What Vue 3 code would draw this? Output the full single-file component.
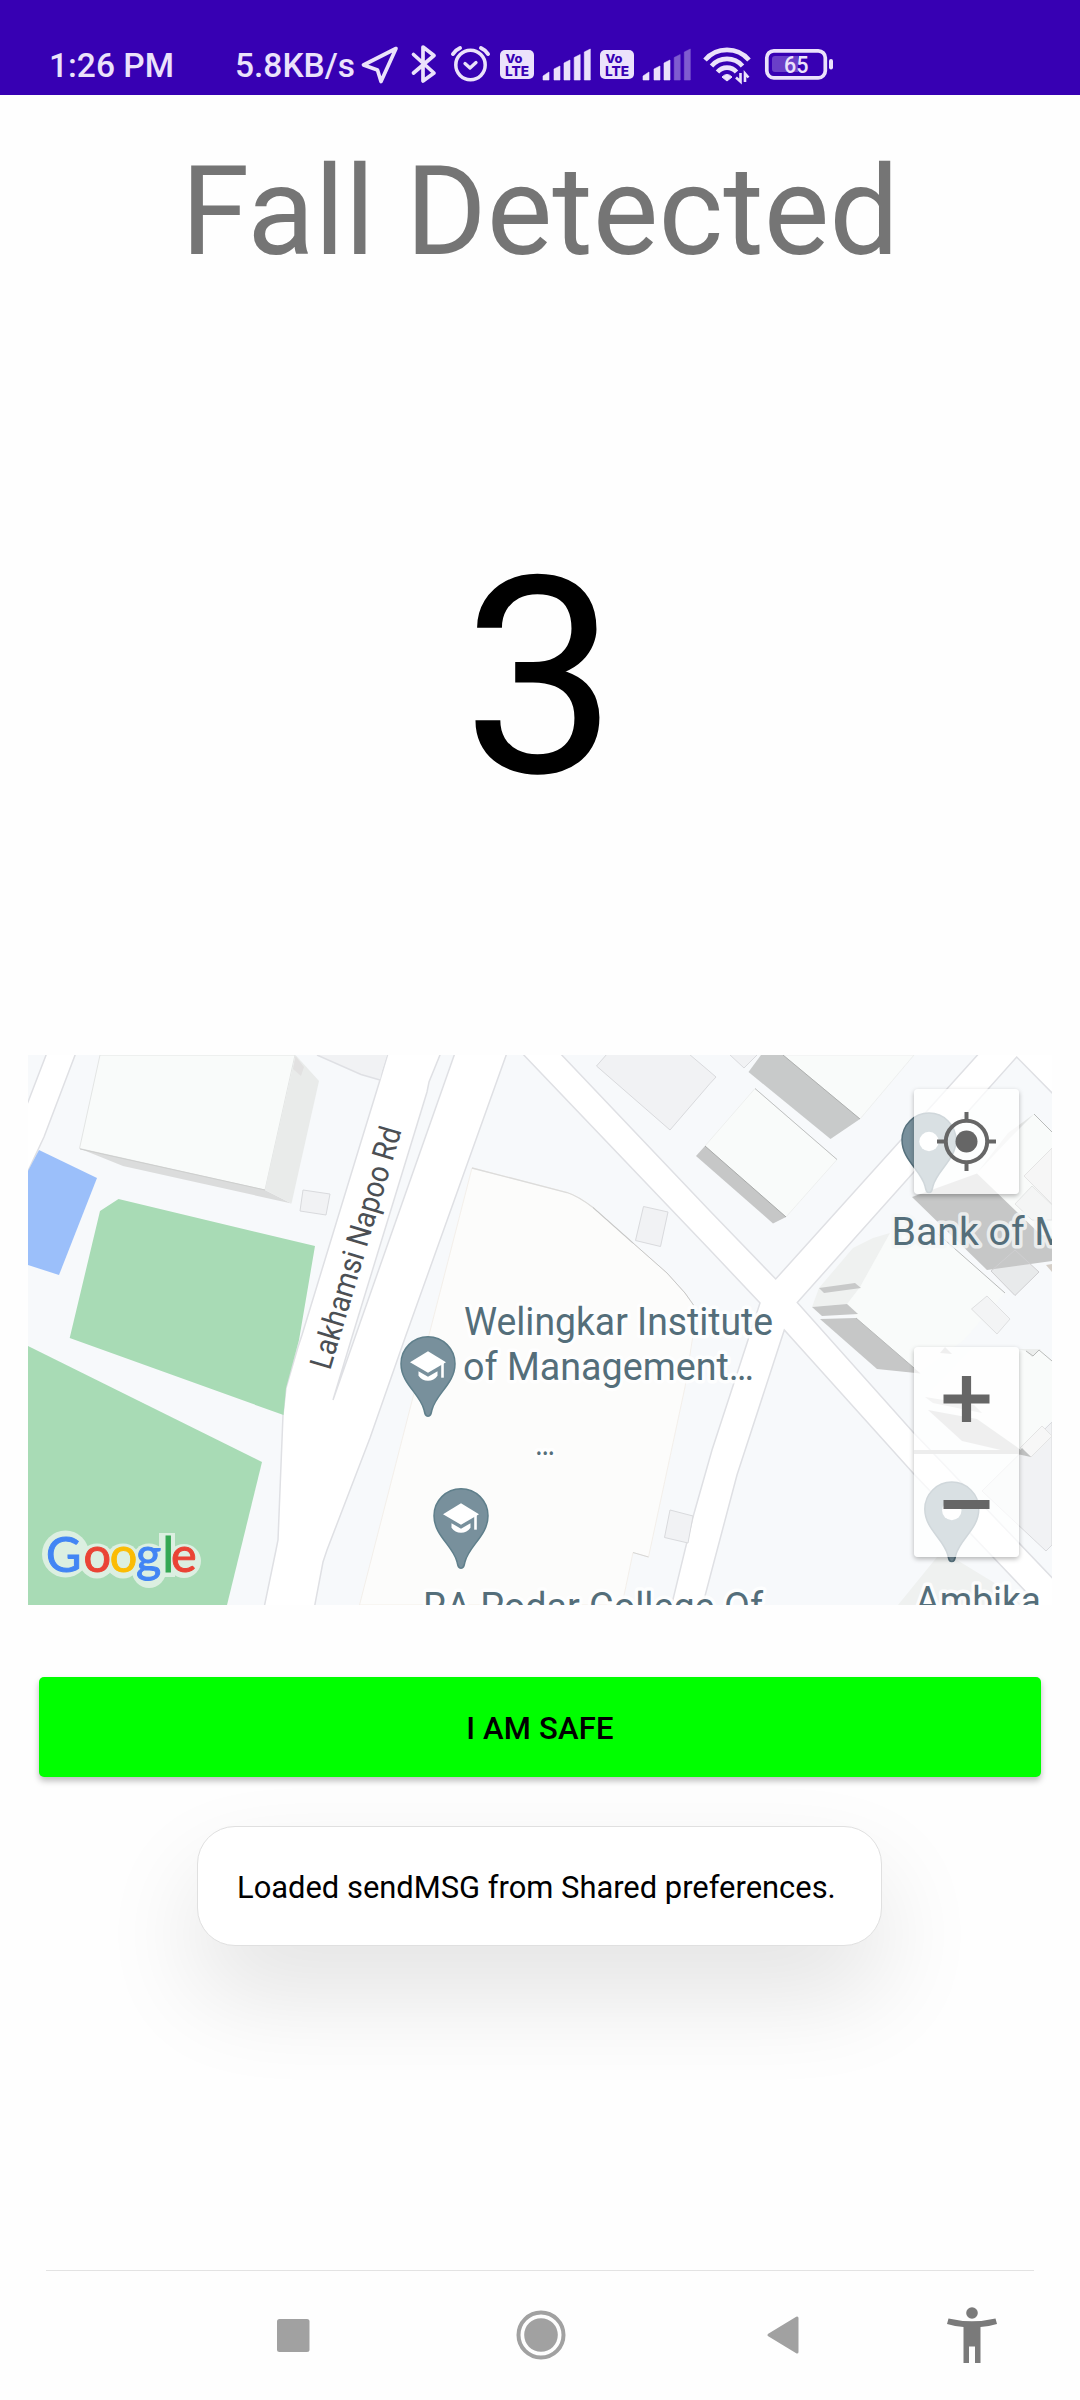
<script setup>
const bars = [
  { x: 543, top: 72, cut: 4 },
  { x: 554, top: 66, cut: 3 },
  { x: 564, top: 60, cut: 3 },
  { x: 574.2, top: 54.5, cut: 3 },
  { x: 584.3, top: 49, cut: 3 },
]
const barPath = (b) =>
  `M${b.x} ${b.top + b.cut}L${b.x + 6} ${b.top}V80H${b.x}Z`

const pinPath =
  'M0 52.5C-3 52.5-3 50-4 46C-8 30-27 20-27 0A27 27 0 0 1 27 0C27 20 8 30 4 46C3 50 3 52.5 0 52.5Z'

const schoolPins = [
  { x: 428, y: 1363.7 },
  { x: 461, y: 1515.7 },
]
const placePins = [
  { x: 929, y: 1140 },
  { x: 951.8, y: 1509 },
]
</script>

<template>
  <div class="screen">
    <header class="status">
      <span class="clock">1:26 PM</span>
      <span class="speed">5.8KB/s</span>
      <svg class="sico" width="45" height="95" viewBox="360 0 45 95">
        <path d="M396 48.5L363.500 65L377.500 70L381 81.500Z" fill="none" stroke="#ebe2fb" stroke-width="3.700" stroke-linejoin="round" />
      </svg>
      <svg class="sico" width="40" height="95" viewBox="405 0 40 95">
        <path d="M413.500 54.500L434 73L423 81V47L434 55.500L413.500 73" fill="none" stroke="#ebe2fb" stroke-width="3.700" stroke-linejoin="round" stroke-linecap="round" />
      </svg>
      <svg class="sico" width="53" height="95" viewBox="445 0 53 95">
        <g fill="none" stroke="#ebe2fb" stroke-linecap="round" stroke-linejoin="round">
          <circle cx="470.500" cy="65" r="14.700" stroke-width="3.500" />
          <path d="M465 63.500L470 68L476 62.500" stroke-width="3.300" />
          <path d="M453 54Q455.500 50 460 48M488 54Q485.500 50 481 48" stroke-width="4" />
        </g>
      </svg>
      <svg class="sico" width="40" height="95" viewBox="498 0 40 95">
        <rect x="500" y="50" width="34" height="29" rx="5" fill="#ebe2fb" />
        <text x="505.500" y="62.500" class="volte small" textLength="17" lengthAdjust="spacingAndGlyphs">Vo</text>
        <text x="505" y="75.500" class="volte" textLength="24" lengthAdjust="spacingAndGlyphs">LTE</text>
      </svg>
      <svg class="sico" width="60" height="95" viewBox="538 0 60 95">
        <path v-for="b in bars" :key="b.x" :d="barPath(b)" fill="#ebe2fb" stroke="#ebe2fb" stroke-width=".6" stroke-linejoin="round" />
      </svg>
      <svg class="sico" width="40" height="95" viewBox="498 0 40 95">
        <rect x="500" y="50" width="34" height="29" rx="5" fill="#ebe2fb" />
        <text x="505.500" y="62.500" class="volte small" textLength="17" lengthAdjust="spacingAndGlyphs">Vo</text>
        <text x="505" y="75.500" class="volte" textLength="24" lengthAdjust="spacingAndGlyphs">LTE</text>
      </svg>
      <svg class="sico" width="60" height="95" viewBox="538 0 60 95">
        <path v-for="(b, i) in bars" :key="b.x" :d="barPath(b)" :fill="i < 3 ? '#ebe2fb' : '#7f5bd0'" :stroke="i < 3 ? '#ebe2fb' : '#7f5bd0'" stroke-width=".6" stroke-linejoin="round" />
      </svg>
      <svg class="sico" width="60" height="95" viewBox="698 0 60 95">
        <g fill="none" stroke="#ebe2fb" stroke-width="4.600">
          <path d="M705 60A29 29 0 0 1 749 60" />
          <path d="M711.500 66A20.500 20.500 0 0 1 742.500 66" />
          <path d="M717.500 72A12.500 12.500 0 0 1 736.500 72" />
        </g>
        <path d="M722 77Q727 72 732 77L727 81Z" fill="#ebe2fb" stroke="#ebe2fb" stroke-linejoin="round" />
        <path d="M740.500 73V81.500L736 77.500M745 82V73.500L748.500 77.500" fill="none" stroke="#ebe2fb" stroke-width="2.600" />
      </svg>
      <svg class="sico" width="82" height="95" viewBox="758 0 82 95">
        <rect x="766.800" y="50.800" width="58.500" height="27" rx="7" fill="none" stroke="#ebe2fb" stroke-width="3.700" />
        <path d="M775 56H798V72H775Q772 72 772 69V59Q772 56 775 56Z" fill="#6a3fc8" />
        <rect x="829" y="59" width="4" height="10.500" rx="2" fill="#ebe2fb" />
        <text x="784" y="72.600" class="level" textLength="24.500" lengthAdjust="spacingAndGlyphs">65</text>
      </svg>
    </header>

    <h1 class="title">Fall Detected</h1>
    <div class="count">3</div>

    <section class="map">
      <svg width="1024" height="550" viewBox="28 1055 1024 550">
        <rect x="28" y="1055" width="1024" height="550" fill="#fff" />
        <!-- city blocks -->
        <g fill="#f7f9fb" stroke="#dfe0e4" stroke-width="1.500">
          <path d="M20 1050H48L28 1102L20 1120Z" />
          <path d="M77 1050L44 1137L28 1171L10 1200V1620H261.500L276 1550L278 1540L283 1415L286 1388L298 1347L302 1335L360 1145L380 1080L389 1050Z" />
          <path d="M442 1050L429 1082L427 1092L352 1337L333 1400L360 1323L456 1050Z" />
          <path d="M508 1050L405 1338L370 1438L327 1550L323 1562L312 1620H668L693 1517L712 1450L748 1340L760 1303L710 1250L519 1050Z" />
          <path d="M557 1050L710 1211L775.700 1279L982 1050Z" />
          <path d="M797.300 1302.500L913 1173L1016.700 1057L1060 1101V1586L913 1432Z" />
          <path d="M784.300 1330L737 1475L710 1577L700 1615H1048L913 1473Z" />
        </g>
        <!-- parks and pool -->
        <path d="M39 1150L97 1178L59 1275L28 1265V1171Z" fill="#9bbffa" />
        <path d="M118.500 1199L315 1246L299 1340L286 1388L283.500 1415L69.700 1338L100 1211Z" fill="#a8dbb5" />
        <path d="M28 1346L262 1462L227 1605H28Z" fill="#a8dbb5" />
        <!-- west building -->
        <path d="M100 1055H295L265 1190L79.500 1148.500Z" fill="#f9fbfa" stroke="#e3e5e4" />
        <path d="M79.500 1148.500L265 1190L291.500 1203.500L123 1166Z" fill="#dbdcdc" />
        <path d="M295.500 1055L319 1081L291.500 1203.500L265 1190Z" fill="#e9ebea" />
        <path d="M295.500 1056L304 1067L301 1076L293 1069Z" fill="#e2e1e1" />
        <path d="M80 1149L265 1190" stroke="#cdcecd" />
        <g fill="#f1f2f4" stroke="#d9dadd">
          <path d="M303 1190L330 1194L326 1215L300 1211Z" />
          <path d="M643.500 1206.500L668 1212L660.500 1246.500L635.500 1240.500Z" />
          <path d="M670 1510L693 1516L688 1543L664.500 1537.500Z" />
          <path d="M607 1054L596.500 1066L670 1130L710 1083.500L716 1077L709 1071L689 1054Z" />
          <path d="M729 1054L744 1068L758 1054Z" />
        </g>
        <path d="M317 1055L361 1074.500L380 1080L382 1070L387 1055Z" fill="#f1f2f4" />
        <path d="M317 1055L361 1074.500L380 1080" fill="none" stroke="#dfe0e4" stroke-width="1.500" />
        <!-- campus -->
        <path d="M472 1168L567 1192.500Q578 1196 593 1207.500L633 1243L667 1273L685 1293L693.500 1305L693 1335L685 1387L648.500 1557L633 1552.500L622 1605H359.500L429 1335Z" fill="#fcfcfb" stroke="#f1ece6" stroke-width=".8" />
        <path d="M472 1168L567 1192.500Q578 1196 593 1207.500L633 1243" fill="none" stroke="#dcdcdb" stroke-width="1.300" />
        <path d="M593 1207.500L633 1243L667 1273L685 1293L693.500 1305" fill="none" stroke="#c6c7c7" />
        <path d="M648.500 1557L633 1552.500" stroke="#d7d7d6" />
        <!-- north-east buildings -->
        <path d="M783 1055L860 1119L914 1055Z" fill="#f9fbfa" stroke="#e9ebea" stroke-width=".7" />
        <path d="M761 1055L748.500 1072L830.500 1139L860 1119L783 1055Z" fill="#c8caca" />
        <path d="M783 1055L860 1119" stroke="#adafae" />
        <path d="M755 1088.500L837 1159.500L786 1217L705 1146Z" fill="#f9fbfa" stroke="#e9ebea" stroke-width=".7" />
        <path d="M705 1146L696 1156L773 1223.500L786 1217Z" fill="#c6c7c7" />
        <path d="M755 1088.500L837 1159.500" stroke="#bfc1c1" />
        <path d="M705 1146L786 1217" stroke="#a9abaa" />
        <!-- corner building -->
        <path d="M890 1233L937 1233L1005 1293L964 1340L920 1373L856 1318L847 1304L858 1285Z" fill="#f9fbfa" />
        <path d="M853 1248L873 1238L890 1233L860 1287L847 1304L812 1307L819 1288Z" fill="#eff1f0" />
        <path d="M819 1288L855 1283L861 1288L824 1293Z" fill="#c8c9c9" />
        <path d="M812 1307L847 1304L858 1314L822 1316Z" fill="#c6c7c7" />
        <path d="M820 1319L856 1318L920.500 1373.500L877 1369Z" fill="#c6c7c7" />
        <path d="M937 1233L1005 1293M856 1318L914 1368" stroke="#b9bbba" />
        <!-- east building -->
        <path d="M977 1173L1034 1114L1052 1131V1261Z" fill="#f9fbfa" />
        <path d="M977 1173L1008 1133L1034 1114L1010 1138Z" fill="#e4e6e5" />
        <path d="M1034 1114L1052 1132" stroke="#b9bbba" />
        <path d="M1024 1176L1052 1148V1204Z" fill="#f6f6f6" stroke="#e4e4e4" />
        <path d="M912 1197L977 1173.500L1041 1235L1052 1236V1261L987 1270Z" fill="#c6c7c7" />
        <path d="M1032 1186L1052 1205V1220L1032 1220L1015 1204Z" fill="#f3f4f4" stroke="#e0e1e1" opacity=".8" />
        <path d="M1015 1250L1039 1272L1015 1295.500L991 1271Z" fill="#c9c9cb" fill-opacity=".32" stroke="#cfcfd1" />
        <path d="M987 1296L1010 1319L997 1334L971.500 1309Z" fill="#f3f4f5" stroke="#dfe0e1" />
        <path d="M1046 1265L1052 1264V1272Z" fill="#d5cfc8" />
        <!-- south-east buildings -->
        <path d="M971 1349H1040L1052 1361V1420L1020 1452L925 1397Z" fill="#f9fbfa" />
        <path d="M1018 1349H1041L1032 1357L1026 1351Z" fill="#eceeed" />
        <path d="M1026 1351L1033 1356L1039 1350L1052 1361" fill="none" stroke="#b9bbba" />
        <path d="M945 1347L952 1354L940 1353Z" fill="#c6c7c7" />
        <path d="M925 1397L974 1405L982 1413L933 1403Z" fill="#d2d3d3" />
        <path d="M928 1410L977 1419L1031 1457L962 1441Z" fill="#c6c7c7" />
        <path d="M982 1491L1052 1422V1545L1046 1551Z" fill="#f1f2f4" stroke="#d9dadd" />
        <path d="M1042 1426L1052 1436L1031 1457L1020 1448Z" fill="#f7f7f7" stroke="#e4e4e4" />
        <path d="M1022 1448L1031 1457L1017 1454Z" fill="#c0c1c1" />
        <path d="M898 1605L937 1557H952L993 1582L1022 1605Z" fill="#eff1f0" />
        <!-- place markers -->
        <g v-for="p in schoolPins" :key="p.y" :transform="`translate(${p.x} ${p.y})`">
          <path :d="pinPath" fill="#78909c" stroke="#5f7f8b" stroke-width="1.500" />
          <path d="M-18-1.500L0-12.500L18-1.500L0 9Z" fill="#fff" />
          <path d="M14.500-1V14" stroke="#fff" stroke-width="2.600" />
          <path d="M-9.500 7.500L0 13L9.500 7.500V12Q6 17 0 17Q-6 17-9.500 12Z" fill="#fff" />
        </g>
        <g v-for="p in placePins" :key="p.y" :transform="`translate(${p.x} ${p.y})`">
          <path :d="pinPath" fill="#78909c" stroke="#56717d" stroke-width="1.500" />
          <circle cy="1.500" r="9.700" fill="#fff" />
        </g>
        <!-- labels -->
        <g class="label">
          <text x="464" y="1335" textLength="309" lengthAdjust="spacingAndGlyphs">Welingkar Institute</text>
          <text x="463" y="1380" textLength="291" lengthAdjust="spacingAndGlyphs">of Management…</text>
          <text x="535" y="1454.500" class="dots" textLength="20" lengthAdjust="spacingAndGlyphs">…</text>
          <text x="423" y="1620" textLength="340" lengthAdjust="spacingAndGlyphs">RA Podar College Of</text>
          <text x="891.500" y="1244.500" textLength="177" lengthAdjust="spacingAndGlyphs" class="shaded">Bank of M</text>
          <text x="915.500" y="1613.500" textLength="125.500" lengthAdjust="spacingAndGlyphs">Ambika</text>
        </g>
        <text class="road" transform="translate(330 1371) rotate(-73.400)" textLength="251" lengthAdjust="spacingAndGlyphs">Lakhamsi Napoo Rd</text>
        <g fill="#dcefe1">
          <circle cx="65.500" cy="1554" r="23.500" />
          <circle cx="97" cy="1561" r="17.500" />
          <circle cx="123" cy="1561" r="17.500" />
          <circle cx="149" cy="1561" r="17.500" />
          <circle cx="149" cy="1571" r="17" />
          <rect x="159" y="1533" width="16" height="44" />
          <circle cx="184" cy="1561" r="17" />
        </g>
        <text class="brand" y="1572" x="46 83.500 109.700 136 162.500 171"><tspan fill="#4285f4" stroke="#4285f4">G</tspan><tspan fill="#ea4335" stroke="#ea4335">o</tspan><tspan fill="#fbbc04" stroke="#fbbc04">o</tspan><tspan fill="#4285f4" stroke="#4285f4">g</tspan><tspan fill="#34a853" stroke="#34a853">l</tspan><tspan fill="#ea4335" stroke="#ea4335">e</tspan></text>
      </svg>
      <div class="controls">
        <div class="ctl">
          <svg width="105" height="105" viewBox="-52.500 -52.500 105 105">
            <circle r="20.700" fill="none" stroke="#666" stroke-width="4" />
            <circle r="11" fill="#666" />
            <path d="M0-29.500V-20M0 29.500V20M-29.500 0H-20M29.500 0H20" stroke="#666" stroke-width="4" />
          </svg>
        </div>
        <div class="ctl zoom">
          <svg width="105" height="103" viewBox="-52.500 -52 105 103"><path d="M-23 0H23M0-23V23" stroke="#666" stroke-width="9.200" /></svg>
          <i class="split"></i>
          <svg width="105" height="103" viewBox="-52.500 -50.500 105 103"><path d="M-23 0H23" stroke="#666" stroke-width="9.200" /></svg>
        </div>
      </div>
    </section>

    <button class="safe">I AM SAFE</button>

    <div class="toast">Loaded sendMSG from Shared preferences.</div>

    <nav class="nav">
      <svg class="square" width="33" height="33" viewBox="0 0 33 33"><rect width="32.500" height="33" rx="2.500" fill="#a1a1a1" /></svg>
      <svg class="home" width="50" height="50" viewBox="-25 -25 50 50">
        <circle r="22.500" fill="none" stroke="#a1a1a1" stroke-width="4" />
        <circle r="16.800" fill="#a1a1a1" />
      </svg>
      <svg class="back" width="33" height="40" viewBox="0 0 33 40"><path d="M31 3V37L3 20Z" fill="#a1a1a1" stroke="#a1a1a1" stroke-width="3" stroke-linejoin="round" /></svg>
      <svg class="access" width="50" height="56" viewBox="0 0 50 56">
        <circle cx="25" cy="6" r="5.800" fill="#7a7a7a" />
        <path d="M1.500 11.500Q25 17 48.500 11.500L50 17Q42 19.500 33.500 20V56H28V39.500H22V56H16.500V20Q8 19.500 0 17Z" fill="#7a7a7a" />
      </svg>
    </nav>
  </div>
</template>

<style>
body {
  margin: 0;
  background: #fefefe;
}
</style>

<style scoped>
.screen {
  display: flex;
  flex-direction: column;
  width: 1080px;
  height: 2400px;
  overflow: hidden;
  background: #fefefe;
  font-family: Roboto, "Liberation Sans", sans-serif;
}
.status {
  display: flex;
  flex: none;
  height: 95px;
  background: #3700b3;
  color: #ebe2fb;
  font-size: 33.500px;
  font-weight: 500;
  line-height: 40px;
  white-space: nowrap;
}
.clock {
  width: 186px;
  padding: 46px 0 0 49px;
}
.speed {
  width: 125px;
  padding-top: 46px;
}
.sico {
  flex: none;
  display: block;
}
.volte {
  font: 800 13.300px Inter, sans-serif;
  fill: #3700b3;
}
.volte.small {
  font-size: 11.500px;
}
.level {
  font: 500 23px Roboto, sans-serif;
  fill: #ebe2fb;
}
.title {
  flex: none;
  margin: 35px 0 0;
  height: 163px;
  font-size: 123.750px;
  line-height: 164px;
  font-weight: 400;
  text-align: center;
  color: #757575;
  white-space: nowrap;
}
.count {
  flex: none;
  height: 762px;
  font-size: 275px;
  line-height: 770px;
  text-align: center;
  color: #000;
}
.map {
  position: relative;
  flex: none;
  width: 1024px;
  height: 550px;
  margin: 0 28px;
}
.map > svg {
  display: block;
}
.label text {
  font: 400 39.500px Roboto, sans-serif;
  fill: #546e7a;
  stroke: #fff;
  stroke-opacity: .85;
  stroke-width: 7px;
  stroke-linejoin: round;
  paint-order: stroke;
}
.label .shaded {
  stroke: #f5f7f7;
  stroke-opacity: .8;
}
.label .dots {
  font-size: 34px;
}
.road {
  font: 400 31px Roboto, sans-serif;
  fill: #4b4f54;
}
.brand {
  font: 400 48.500px Lato, sans-serif;
  stroke-width: 1px;
}
.controls {
  position: absolute;
  top: 34px;
  right: 33px;
  display: flex;
  flex-direction: column;
  gap: 153px;
}
.ctl {
  width: 105px;
  height: 105px;
  background: rgba(255, 255, 255, .72);
  border-radius: 4px;
  box-shadow: 0 2px 5px rgba(0, 0, 0, .28);
}
.ctl svg {
  display: block;
}
.zoom {
  height: 209.500px;
}
.split {
  display: block;
  height: 3.500px;
  background: #ededed;
}
.safe {
  flex: none;
  height: 100px;
  margin: 72px 39px 0;
  padding: 3px 0 0;
  border: 0;
  border-radius: 5px;
  background: #0f0;
  box-shadow: 0 4px 6px rgba(0, 0, 0, .26);
  font: 500 31px/97px Roboto, sans-serif;
  letter-spacing: .2px;
  color: #000;
}
.toast {
  flex: none;
  box-sizing: border-box;
  width: 685px;
  height: 120px;
  margin: 49px 0 0 197px;
  padding-left: 39px;
  border: 1px solid #e0e0e0;
  border-radius: 38px;
  background: #fff;
  box-shadow: 0 48px 100px rgba(0, 0, 0, .11);
  font-size: 30.900px;
  line-height: 121px;
  color: #000;
  white-space: nowrap;
}
.nav {
  display: flex;
  align-items: center;
  flex: none;
  box-sizing: border-box;
  height: 129px;
  margin: 324px 46px 0;
  border-top: 1px solid #e3e3e3;
}
.square {
  margin-left: 231px;
}
.home {
  margin-left: 205.500px;
}
.back {
  margin-left: 200.500px;
}
.access {
  margin-left: 148px;
}
</style>
